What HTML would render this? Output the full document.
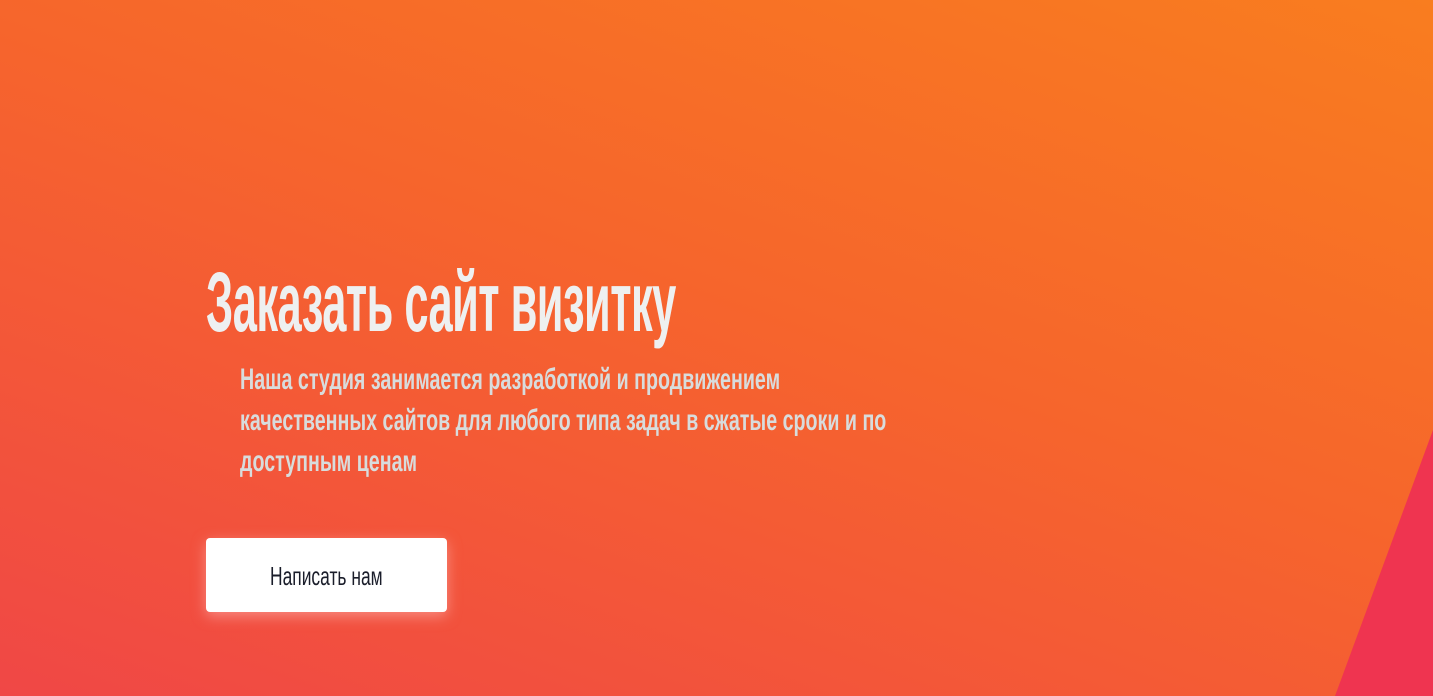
<!DOCTYPE html>
<html><head><meta charset="utf-8"><style>
html,body{margin:0;padding:0}
body{width:1433px;height:696px;overflow:hidden;position:relative;font-family:"Liberation Sans","DejaVu Sans",sans-serif;
background:linear-gradient(200deg,#f97d1f 0%,#f6652c 45%,#f04746 100%);}
.tri{position:absolute;left:0;top:0}
.t{position:absolute;white-space:nowrap;transform-origin:0 0}
#h{left:206px;top:254px;font-size:84px;font-weight:bold;color:#eef0f0;transform:scaleX(0.517);letter-spacing:-1px}
.s{left:240px;font-size:30px;color:#d8dcdc;font-weight:bold;transform:scaleX(0.655)}
#btn{position:absolute;left:206px;top:538px;width:241px;height:74px;background:#fff;border-radius:4px;box-shadow:0 4px 14px rgba(255,200,200,.5)}
#bt{left:270px;top:561px;font-size:26px;color:#1a1d2a;transform:scaleX(0.67)}
</style></head><body>
<svg class="tri" width="1433" height="696"><polygon points="1433,430 1433,696 1335,696" fill="#ef3450"/></svg>
<div class="t" id="h">Заказать сайт визитку</div>
<div class="t s" style="top:363px">Наша студия занимается разработкой и продвижением</div>
<div class="t s" style="top:404px">качественных сайтов для любого типа задач в сжатые сроки и по</div>
<div class="t s" style="top:445px">доступным ценам</div>
<div id="btn"></div>
<div class="t" id="bt">Написать нам</div>
</body></html>
